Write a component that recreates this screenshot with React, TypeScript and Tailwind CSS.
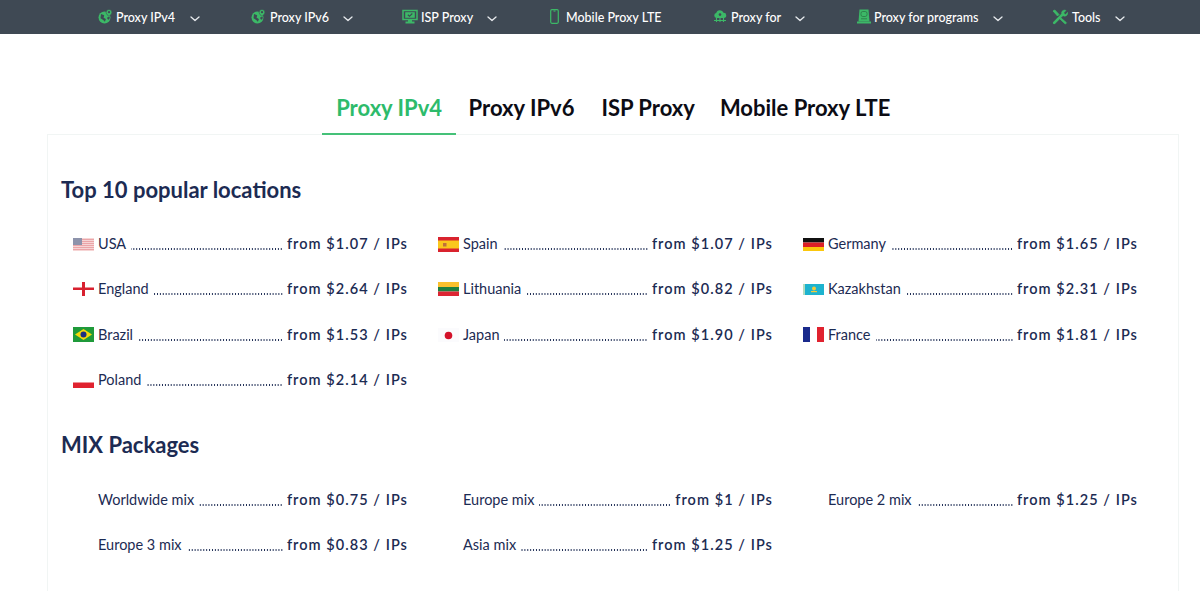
const GREEN = "#3cb867";
const BAR = "#3f4954";

function Chevron() {
  return (
    <svg width="10" height="6" viewBox="0 0 10 6" fill="none" stroke="#e8ebee" strokeWidth="1.3" strokeLinecap="round" strokeLinejoin="round">
      <path d="M1 1l4 3.600L9 1" />
    </svg>
  );
}

function GlobeIcon() {
  return (
    <svg width="15" height="15" viewBox="0 0 15 15">
      <circle cx="6.500" cy="8.500" r="6" fill={GREEN} />
      <path d="M3 5l3.200 1.300-.6 2.500 2.300 1.300-1 2.700-1.700-1.900-2.700-1.700zM9.500 8l2.500.3-1 2.500-1.700-.8z" fill={BAR} />
      <path d="M11 .4a2.900 2.900 0 0 1 2.900 2.900c0 1.800-2.900 4.300-2.900 4.300S8.100 5.100 8.100 3.300A2.900 2.900 0 0 1 11 .4z" fill={GREEN} stroke={BAR} strokeWidth=".6" />
      <circle cx="11" cy="3.200" r="1.100" fill={BAR} />
    </svg>
  );
}

function IspIcon() {
  return (
    <svg width="16" height="15" viewBox="0 0 16 15">
      <path d="M1 1.500h14v9H1z" fill="none" stroke={GREEN} strokeWidth="1.500" />
      <path d="M3.200 3.200h9.600v5.600H3.200z" fill={GREEN} />
      <path d="M5.800 5.800l1.700 1.500 2.800-2.800" fill="none" stroke={BAR} strokeWidth="1.200" />
      <path d="M6 10.500h4v2h2.500v2h-9v-2H6z" fill={GREEN} />
    </svg>
  );
}

function PhoneIcon() {
  return (
    <svg width="9" height="15" viewBox="0 0 9 15" fill="none" stroke={GREEN} strokeWidth="1.200">
      <rect x=".7" y=".7" width="7.600" height="13.600" rx="1.200" />
      <path d="M3.500 2h2" />
    </svg>
  );
}

function CloudIcon() {
  return (
    <svg width="14" height="13" viewBox="0 0 14 13">
      <path d="M3.400 8A2.500 2.500 0 0 1 3.200 3.100a3.800 3.800 0 0 1 7.300-.3A2.600 2.600 0 0 1 10.800 8z" fill={GREEN} />
      <circle cx="7" cy="4.600" r="1.300" fill={BAR} />
      <path d="M1 10.500h12M3.500 8v4M10.500 8v4M7 8v4" stroke={GREEN} strokeWidth="1.100" fill="none" />
    </svg>
  );
}

function ProgramsIcon() {
  return (
    <svg width="14" height="15" viewBox="0 0 14 15">
      <path d="M2.500.5h9l1 12h-11z" fill={GREEN} />
      <rect x="4" y="2.500" width="6" height="5" rx="1.800" fill="none" stroke="#2c7d49" strokeWidth=".9" />
      <path d="M0 12.500h14v2H0z" fill={GREEN} />
      <path d="M4 9.800h6" stroke="#2c7d49" strokeWidth=".9" />
    </svg>
  );
}

function ToolsIcon() {
  return (
    <svg width="16" height="16" viewBox="0 0 16 16" fill="none" stroke={GREEN}>
      <path d="M2.200 13.800L11 5" strokeWidth="2.600" strokeLinecap="round" />
      <path d="M9.500 4A3 3 0 0 1 14 1.500L11.800 3.800l.5 1.300 1.300.4L15.700 3.300A3.200 3.200 0 0 1 11.500 7z" fill={GREEN} strokeWidth=".5" />
      <path d="M1 2l1.800-1L7 5.500 5.500 7zM9 9l5.500 4.800-1.200 1.200L8 10z" fill={GREEN} strokeWidth=".8" />
    </svg>
  );
}

const navItems = [
  { label: "Proxy IPv4", icon: <GlobeIcon />, width: "w-[153px]", iconBox: "w-[18px]", chevGap: "ml-[15px]" },
  { label: "Proxy IPv6", icon: <GlobeIcon />, width: "w-[151px]", iconBox: "w-[19px]", chevGap: "ml-[14px]" },
  { label: "ISP Proxy", icon: <IspIcon />, width: "w-[148px]", iconBox: "w-[19px]", chevGap: "ml-[14px]" },
  { label: "Mobile Proxy LTE", icon: <PhoneIcon />, width: "w-[163px]", iconBox: "w-[16px]", chevGap: "" },
  { label: "Proxy for", icon: <CloudIcon />, width: "w-[144px]", iconBox: "w-[18px]", chevGap: "ml-[14px]" },
  { label: "Proxy for programs", icon: <ProgramsIcon />, width: "w-[195px]", iconBox: "w-[17px]", chevGap: "ml-[14px]" },
  { label: "Tools", icon: <ToolsIcon />, width: "w-[80px]", iconBox: "w-[20px]", chevGap: "ml-[14px]" },
];

function Flag({ code }: { code: string }) {
  if (code === "us") {
    return (
      <svg width="21" height="13" viewBox="0 0 21 13">
        <rect width="21" height="13" fill="#f6d5d5" />
        {[1, 3, 5, 7, 9, 11].map((y) => (
          <rect key={y} y={y} width="21" height="1" fill="#eba5a8" />
        ))}
        <rect width="9" height="7" fill="#8d93ab" />
      </svg>
    );
  }
  if (code === "en") {
    return (
      <svg width="21" height="14" viewBox="0 0 21 14">
        <rect width="21" height="14" fill="#fff" />
        <rect x="9" width="3" height="14" fill="#d8202f" />
        <rect y="5.500" width="21" height="2.500" fill="#d8202f" />
      </svg>
    );
  }
  if (code === "br") {
    return (
      <svg width="21" height="15" viewBox="0 0 21 15">
        <rect width="21" height="15" fill="#1f9a3a" />
        <path d="M10.500 2L19 7.500 10.500 13 2 7.500z" fill="#f5d90a" />
        <circle cx="10.500" cy="7.500" r="3" fill="#1c2f80" />
      </svg>
    );
  }
  if (code === "pl") {
    return (
      <svg width="21" height="15" viewBox="0 0 21 15">
        <rect width="21" height="9" fill="#fff" />
        <rect y="9.500" width="21" height="5.500" fill="#e0222f" />
      </svg>
    );
  }
  if (code === "es") {
    return (
      <svg width="21" height="15" viewBox="0 0 21 15">
        <rect width="21" height="15" fill="#d9232e" />
        <rect y="3.500" width="21" height="8" fill="#fac81d" />
        <rect x="5" y="6" width="3.500" height="3.500" fill="#c0703a" />
      </svg>
    );
  }
  if (code === "lt") {
    return (
      <svg width="21" height="14" viewBox="0 0 21 14">
        <rect width="21" height="5" fill="#fbc02d" />
        <rect y="5" width="21" height="4.500" fill="#1f7f3f" />
        <rect y="9.500" width="21" height="4.500" fill="#dc2533" />
      </svg>
    );
  }
  if (code === "jp") {
    return (
      <svg width="21" height="14" viewBox="0 0 21 14">
        <rect width="21" height="14" fill="#fbfbfd" />
        <circle cx="10.500" cy="7.500" r="3.800" fill="#d3122a" />
      </svg>
    );
  }
  if (code === "de") {
    return (
      <svg width="21" height="13" viewBox="0 0 21 13">
        <rect width="21" height="4.500" fill="#111" />
        <rect y="4.500" width="21" height="4.500" fill="#dc1f26" />
        <rect y="9" width="21" height="4" fill="#fbc70c" />
      </svg>
    );
  }
  if (code === "kz") {
    return (
      <svg width="21" height="11" viewBox="0 0 21 11">
        <rect width="21" height="11" fill="#1db3cf" />
        <rect width="2" height="11" fill="#b3dcc0" />
        <circle cx="11" cy="4.500" r="2" fill="#f3cb3a" />
        <rect x="8" y="7" width="6" height="1.200" fill="#f3cb3a" />
      </svg>
    );
  }
  return (
    <svg width="21" height="15" viewBox="0 0 21 15">
      <rect width="7" height="15" fill="#1a2a8c" />
      <rect x="7" width="7" height="15" fill="#fff" />
      <rect x="14" width="7" height="15" fill="#e0222f" />
    </svg>
  );
}

function Row({ name, price, flag }: { name: string; price: string; flag?: string }) {
  return (
    <div className="flex h-[45.4px] text-[#1c2b53]">
      <div className="w-[25px] shrink-0 h-[20px] flex items-center">
        {flag ? <Flag code={flag} /> : null}
      </div>
      <span className="text-[14.5px] shrink-0 leading-[20px] h-[20px]">{name}</span>
      {/* dotted leader, anchored to the price side */}
      <span className="flex-1 min-w-0 h-[16px] ml-[5px] mr-[4px] bg-[radial-gradient(circle,#1c2b53_0.6px,transparent_0.9px)] bg-[length:2.9px_2px] bg-repeat-x bg-right-bottom" />
      <span className="text-[14.5px] font-semibold shrink-0 leading-[20px] h-[20px] tracking-[1.05px]">{price}</span>
    </div>
  );
}

const popular = [
  { name: "USA", price: "from $1.07 / IPs", flag: "us" },
  { name: "Spain", price: "from $1.07 / IPs", flag: "es" },
  { name: "Germany", price: "from $1.65 / IPs", flag: "de" },
  { name: "England", price: "from $2.64 / IPs", flag: "en" },
  { name: "Lithuania", price: "from $0.82 / IPs", flag: "lt" },
  { name: "Kazakhstan", price: "from $2.31 / IPs", flag: "kz" },
  { name: "Brazil", price: "from $1.53 / IPs", flag: "br" },
  { name: "Japan", price: "from $1.90 / IPs", flag: "jp" },
  { name: "France", price: "from $1.81 / IPs", flag: "fr" },
  { name: "Poland", price: "from $2.14 / IPs", flag: "pl" },
];

const mix = [
  { name: "Worldwide mix", price: "from $0.75 / IPs" },
  { name: "Europe mix", price: "from $1 / IPs" },
  { name: "Europe 2 mix", price: "from $1.25 / IPs" },
  { name: "Europe 3 mix", price: "from $0.83 / IPs" },
  { name: "Asia mix", price: "from $1.25 / IPs" },
];

export default function App() {
  return (
    <div className="h-[591px] overflow-hidden bg-white font-['Lato',sans-serif]">
      <nav className="h-[34px] bg-[#3f4954] flex items-center pl-[98px] pt-[3px] text-white text-[12.5px]">
        {navItems.map((item) => (
          <div key={item.label} className={`${item.width} shrink-0 flex items-center`}>
            <span className={`${item.iconBox} shrink-0 flex -mt-[4px]`}>{item.icon}</span>
            <span className="font-medium">{item.label}</span>
            {item.chevGap ? (
              <span className={`${item.chevGap} flex`}>
                <Chevron />
              </span>
            ) : null}
          </div>
        ))}
      </nav>

      <div className="ml-[47px] w-[1132px]">
        <div className="flex justify-center mt-[55px] text-[22px] font-bold leading-[38px] text-[#0c0c14]">
          <div className="h-[46px] px-[14px] -mr-px text-[#2dbb6b] border-b-2 border-[#45c178]">Proxy IPv4</div>
          <div className="h-[46px] px-[13.5px]">Proxy IPv6</div>
          <div className="h-[46px] px-[13.5px]">ISP Proxy</div>
          <div className="h-[46px] pl-[11.5px] pr-[13.5px]">Mobile Proxy LTE</div>
        </div>

        <section className="h-[500px] border border-[#f1f5f4] -mt-px">
          <h2 className="mt-[41px] pl-[13px] text-[22px] font-bold leading-[28px] text-[#1c2b53]">Top 10 popular locations</h2>
          <div className="grid grid-cols-[335px_335px_335px] gap-x-[30px] mt-[30px] pl-[25px]">
            {popular.map((row) => (
              <Row key={row.name} {...row} />
            ))}
          </div>
          <h2 className="mt-[15px] pl-[13px] text-[22px] font-bold leading-[28px] text-[#1c2b53]">MIX Packages</h2>
          <div className="grid grid-cols-[335px_335px_335px] gap-x-[30px] mt-[31px] pl-[25px]">
            {mix.map((row) => (
              <Row key={row.name} {...row} />
            ))}
          </div>
        </section>
      </div>
    </div>
  );
}
